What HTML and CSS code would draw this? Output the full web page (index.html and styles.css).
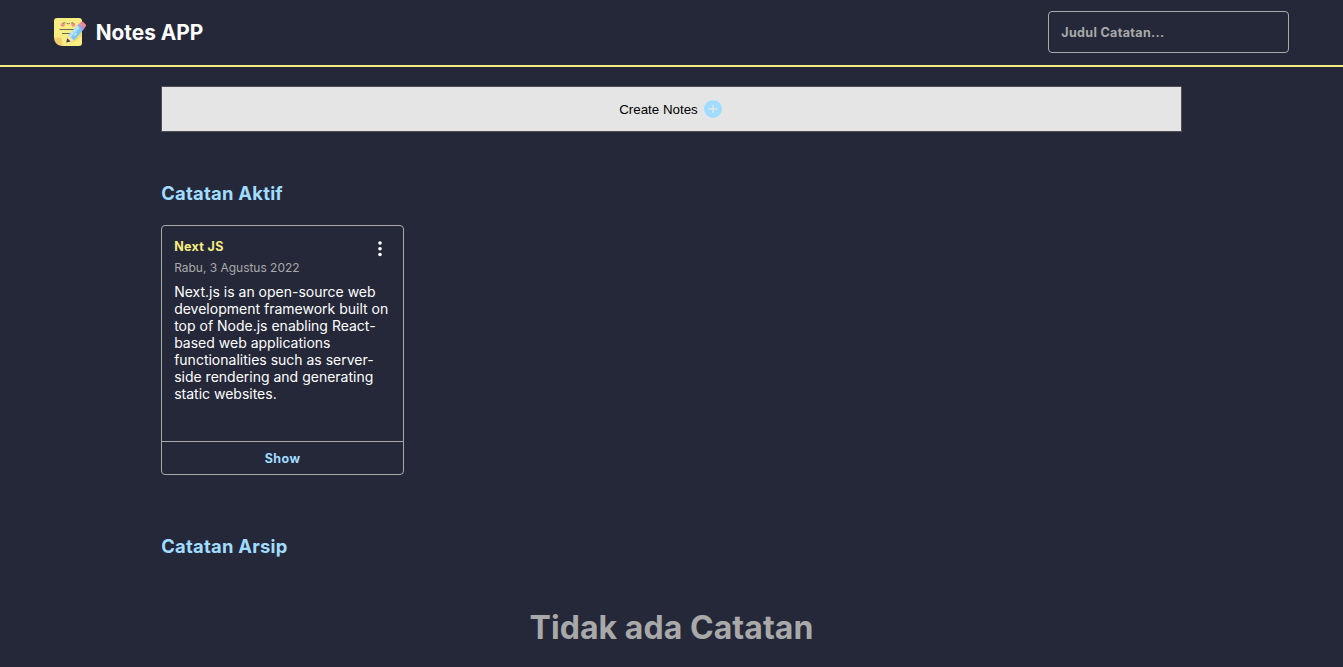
FILE: index.html
```html
<!DOCTYPE html>
<html lang="id">
<head>
<meta charset="utf-8">
<title>Notes APP</title>
<link rel="stylesheet" href="styles.css">
</head>
<body>
<header class="header">
  <div class="brand">
    <svg class="logo" width="32" height="32" viewBox="0 0 32 32">
      <path fill="#f7ed80" d="M3 2h22a3 3 0 0 1 3 3v22a3 3 0 0 1-3 3H8L0 22V5a3 3 0 0 1 3-3z"/>
      <path fill="#efcf70" d="M0 21.500c2.500.500 5 .2 7.500 0 .5 3 .5 6 1.500 8.500C4 30 0 26.500 0 21.500z"/>
      <path fill="#edcf70" d="M28 12v8l-8 6h-8v-2l2-5z" opacity=".6"/>
      <circle cx="8.800" cy="8.800" r="2" fill="#f58b94"/>
      <circle cx="19.300" cy="8.800" r="2" fill="#f58b94"/>
      <path fill="none" stroke="#655f58" stroke-width=".8" stroke-linecap="round" d="M9.200 7q1-1.300 2 0M17.300 7q1-1.300 2 0M13 7.500q1.300 1 2.600 0"/>
      <path fill="none" stroke="#69665c" d="M5.500 13.500H20M8 17.500h10"/>
      <path fill="#fbe0b0" d="m12.500 26 2-7 5.500 5.500z"/>
      <path fill="#7dc5f3" d="m14.500 19 10-10.500 5 5L20 24.500z"/>
      <path fill="#b3e3fc" d="m14.500 19 10-10.500 2.300 2.300L16.800 21.300z"/>
      <path fill="#ad9be0" d="m23.500 9.500 2-2.200 5 5-2 2.200z"/>
      <path fill="#f08997" d="m25.500 7.300 1.200-1.100a2 2 0 0 1 2.700 0l2 2a2 2 0 0 1 0 2.700l-1.200 1.300z"/>
      <path fill="#3d3d4d" d="m12.300 26.500 1-4.300 3.300 3.200z"/>
      <path stroke="#fff" d="m20.500 19.500 2-2.500"/>
    </svg>
    <div class="brand-name">Notes APP</div>
  </div>
  <input class="search" type="text" placeholder="Judul Catatan...">
</header>
<main class="content">
  <button class="create"><span>Create Notes</span>
    <svg width="18" height="18" viewBox="0 0 18 18"><circle cx="9" cy="9" r="9" fill="#a0dcff"/><path d="M9 4.700v8.600M4.700 9h8.600" stroke="#e5e5e5" stroke-width="1.500"/></svg>
  </button>
  <h2 class="section-title">Catatan Aktif</h2>
  <article class="note">
    <div class="note-body">
      <div class="note-head">
        <div>
          <h3 class="note-title">Next JS</h3>
          <p class="note-date">Rabu, 3 Agustus 2022</p>
        </div>
        <svg class="menu" width="4" height="16" viewBox="0 0 4 16" fill="#fff"><circle cx="2" cy="2" r="1.800"/><circle cx="2" cy="7.800" r="1.800"/><circle cx="2" cy="13.500" r="1.800"/></svg>
      </div>
      <p class="note-text">Next.js is an open-source web development framework built on top of Node.js enabling React-based web applications functionalities such as server-side rendering and generating static websites.</p>
    </div>
    <button class="show">Show</button>
  </article>
  <h2 class="section-title archive">Catatan Arsip</h2>
  <div class="empty">Tidak ada Catatan</div>
</main>
</body>
</html>
```
FILE: styles.css
```css
* { box-sizing: border-box; margin: 0; padding: 0; }
body { background: #252839; color: #fff; font-family: Inter, sans-serif; height: 667px; overflow: hidden; }
.header { display: flex; align-items: center; justify-content: space-between; height: 67px; padding: 0 4% 2px; border-bottom: 2px solid #f5ed80; }
.brand { display: flex; align-items: center; gap: 10px; }
.logo { display: block; }
.brand-name { padding-top: 1px; font-size: 20.8px; font-weight: 700; line-height: 25px; }
.search { width: 241px; height: 42px; padding: 2px 12px 0; border: 1px solid #a9a9a9; border-radius: 4px; background: transparent; color: #fff; font: 700 12.49px Inter, sans-serif; letter-spacing: .36px; outline: none; }
.search::placeholder { color: #a9a9a9; opacity: 1; }
.content { width: 76%; margin: 0 auto; padding-top: 19px; }
.create { display: flex; align-items: center; justify-content: center; gap: 6px; width: 100%; height: 46px; padding-right: 2px; border: 1px solid #4f4e55; border-radius: 1px; background: #e5e5e5; color: #000; font: 13.333px "Liberation Sans", Arial, sans-serif; }
.section-title { margin-top: 50px; padding-bottom: 1px; font-size: 18.4px; line-height: 22px; letter-spacing: .25px; font-weight: 700; color: #a0dcff; }
.note { display: flex; flex-direction: column; width: 243px; height: 250px; margin-top: 20px; border: 1px solid #a9a9a9; border-radius: 4px; }
.note-body { flex: 1; padding: 12px; }
.note-head { display: flex; justify-content: space-between; }
.note-title { padding-top: 1px; font-size: 12.49px; line-height: 16px; letter-spacing: .35px; color: #f5ed80; }
.note-date { margin-top: 5px; font-size: 12px; line-height: 15px; letter-spacing: -.02px; color: #a9a9a9; }
.menu { margin: 3px 9px 0 0; }
.note-text { margin-top: 8px; font-size: 14px; line-height: 17px; }
.show { height: 33px; border: 0; border-top: 1px solid #a9a9a9; background: transparent; color: #a0dcff; font: 700 12.49px Inter, sans-serif; letter-spacing: .5px; }
.archive { margin-top: 60px; }
.empty { margin-top: 50px; text-align: center; color: #a9a9a9; font-size: 32px; line-height: 39px; letter-spacing: .06px; font-weight: 700; }
```
